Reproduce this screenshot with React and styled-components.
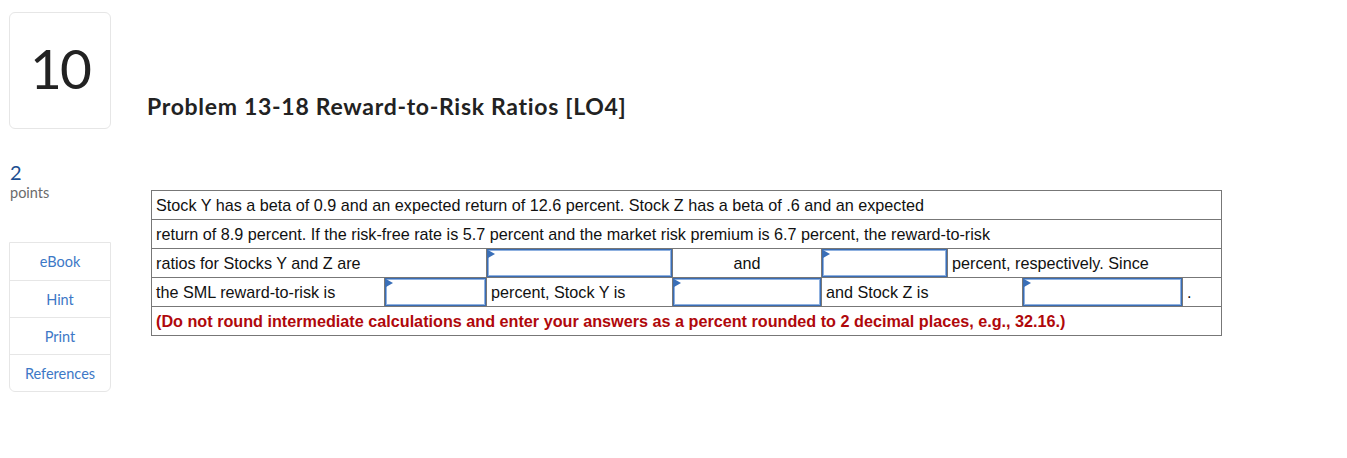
import React from 'react';
import styled, { createGlobalStyle } from 'styled-components';

const GlobalStyle = createGlobalStyle`
  body {
    margin: 0;
    background: #fff;
    font-family: "Liberation Sans", Arial, sans-serif;
  }
`;

const App = () => {
  return (
    <>
      <GlobalStyle />
      <Page>
        <Sidebar />
        <Main>
          <Title>Problem 13-18 Reward-to-Risk Ratios [LO4]</Title>
          <Question />
        </Main>
      </Page>
    </>
  );
};

const Sidebar = () => (
  <Side>
    <NumberBox>10</NumberBox>
    <Points>
      <PointsValue>2</PointsValue>
      <PointsLabel>points</PointsLabel>
    </Points>
    <ToolList>
      <ToolItem>eBook</ToolItem>
      <ToolItem>Hint</ToolItem>
      <ToolItem>Print</ToolItem>
      <ToolItem>References</ToolItem>
    </ToolList>
  </Side>
);

const Answer = () => (
  <InputCell>
    <Flag />
    <AnswerInput type="text" />
  </InputCell>
);

const Question = () => (
  <Table>
    <colgroup>
      <col style={{ width: 233 }} />
      <col style={{ width: 102 }} />
      <col style={{ width: 186 }} />
      <col style={{ width: 149 }} />
      <col style={{ width: 126 }} />
      <col style={{ width: 75 }} />
      <col style={{ width: 160 }} />
      <col style={{ width: 39 }} />
    </colgroup>
    <tbody>
      <tr>
        <Cell colSpan={8}>
          Stock Y has a beta of 0.9 and an expected return of 12.6 percent. Stock Z has a beta of .6 and an expected
        </Cell>
      </tr>
      <tr>
        <Cell colSpan={8}>
          return of 8.9 percent. If the risk-free rate is 5.7 percent and the market risk premium is 6.7 percent, the reward-to-risk
        </Cell>
      </tr>
      <tr>
        <Cell colSpan={2}>ratios for Stocks Y and Z are</Cell>
        <Answer />
        <Cell $center>and</Cell>
        <Answer />
        <Cell colSpan={3}>percent, respectively. Since</Cell>
      </tr>
      <tr>
        <Cell>the SML reward-to-risk is</Cell>
        <Answer />
        <Cell>percent, Stock Y is</Cell>
        <Answer />
        <Cell colSpan={2}>and Stock Z is</Cell>
        <Answer />
        <Cell>.</Cell>
      </tr>
      <tr>
        <Cell colSpan={8} $note>
          (Do not round intermediate calculations and enter your answers as a percent rounded to 2 decimal places, e.g., 32.16.)
        </Cell>
      </tr>
    </tbody>
  </Table>
);

const Page = styled.div`
  display: flex;
  gap: 36px;
  padding: 12px 0 0 9px;
`;

const Side = styled.aside`
  width: 102px;
  display: flex;
  flex-direction: column;
`;

const NumberBox = styled.div`
  height: 117px;
  border: 1px solid #e6e6e6;
  border-radius: 6px;
  display: grid;
  place-content: center;
  font-family: "Lato", "Open Sans", sans-serif;
  font-weight: 400;
  font-size: 55px;
  letter-spacing: -2px;
  color: #222;
  padding-bottom: 6px;
  box-sizing: border-box;
`;

const Points = styled.div`
  margin-top: 32px;
  padding-left: 1px;
  font-family: "Lato", "Open Sans", sans-serif;
`;

const PointsValue = styled.div`
  font-size: 20px;
  line-height: 22px;
  color: #1d4f91;
`;

const PointsLabel = styled.div`
  font-size: 14.5px;
  line-height: 18px;
  margin-top: 1px;
  color: #6b6b6b;
`;

const ToolList = styled.ul`
  list-style: none;
  margin: 40px 0 0;
  padding: 0;
  border: 1px solid #e6e6e6;
  border-radius: 0 0 6px 6px;
`;

const ToolItem = styled.li`
  height: 37px;
  display: grid;
  place-content: center;
  font-family: "Lato", "Open Sans", sans-serif;
  font-size: 14.5px;
  box-sizing: border-box;
  color: #3d78c6;
  & + & {
    border-top: 1px solid #e6e6e6;
  }
`;

const Main = styled.main`
  display: flex;
  flex-direction: column;
`;

const Title = styled.h1`
  margin: 80px 0 0;
  font-family: "Lato", "Open Sans", sans-serif;
  font-weight: 700;
  font-size: 23px;
  letter-spacing: 0.7px;
  font-variant-ligatures: none;
  line-height: 28px;
  color: #222;
`;

const Table = styled.table`
  margin: 70px 0 0 4px;
  width: 1071px;
  table-layout: fixed;
  border-collapse: collapse;
  font-family: "Liberation Sans", Arial, sans-serif;
  font-size: 16.2px;
  color: #111;
`;

const Cell = styled.td`
  height: 28px;
  padding: 0 4px;
  border: 1px solid #777;
  white-space: nowrap;
  overflow: hidden;
  text-align: ${(p) => (p.$center ? 'center' : 'left')};
  color: ${(p) => (p.$note ? '#b0080b' : '#111')};
  font-weight: ${(p) => (p.$note ? 700 : 400)};
`;

const InputCell = styled.td`
  position: relative;
  height: 28px;
  padding: 0;
  border: 1px solid #777;
`;

const AnswerInput = styled.input`
  display: block;
  width: 100%;
  height: 28px;
  box-sizing: border-box;
  margin: 0;
  border: 1px solid #3b6db3;
  box-shadow: inset 0 0 0 1px #8fb1e0;
  background: #fff;
  outline: none;
`;

const Flag = styled.span`
  position: absolute;
  top: 1px;
  left: 1px;
  width: 0;
  height: 0;
  border-top: 4px solid transparent;
  border-bottom: 4px solid transparent;
  border-left: 7px solid #3a6fb8;
  z-index: 1;
`;

export default App;
